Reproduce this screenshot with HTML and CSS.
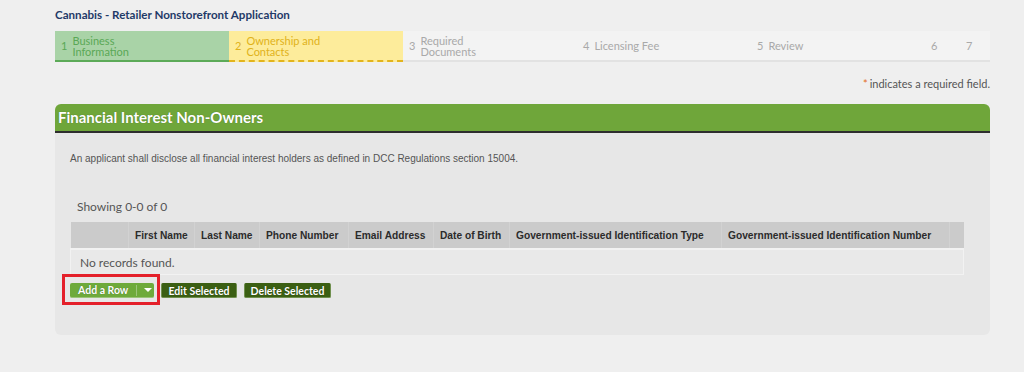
FILE: index.html
```html
<!DOCTYPE html>
<html>
<head>
<meta charset="utf-8">
<link rel="stylesheet" href="styles.css">
</head>
<body>
<div class="page">
  <h1 class="app-title">Cannabis - Retailer Nonstorefront Application</h1>
  <div class="steps">
    <div class="step done"><span class="num">1</span><span class="label">Business<br>Information</span></div>
    <div class="step current"><span class="num">2</span><span class="label">Ownership and<br>Contacts</span></div>
    <div class="step"><span class="num">3</span><span class="label">Required<br>Documents</span></div>
    <div class="step"><span class="num">4</span><span class="label">Licensing Fee</span></div>
    <div class="step"><span class="num">5</span><span class="label">Review</span></div>
    <div class="step small"><span class="num">6</span></div>
    <div class="step tiny"><span class="num">7</span></div>
  </div>
  <div class="required-note"><span class="star">*</span>indicates a required field.</div>
  <div class="panel">
    <div class="panel-head">Financial Interest Non-Owners</div>
    <div class="panel-body">
      <p class="desc">An applicant shall disclose all financial interest holders as defined in DCC Regulations section 15004.</p>
      <div class="showing">Showing 0-0 of 0</div>
      <table class="grid">
        <thead>
          <tr>
            <th class="c-check"></th>
            <th class="c-first">First Name</th>
            <th class="c-last">Last Name</th>
            <th class="c-phone">Phone Number</th>
            <th class="c-email">Email Address</th>
            <th class="c-dob">Date of Birth</th>
            <th class="c-type">Government-issued Identification Type</th>
            <th class="c-number">Government-issued Identification Number</th>
            <th class="c-end"></th>
          </tr>
        </thead>
        <tbody>
          <tr><td colspan="9" class="empty">No records found.</td></tr>
        </tbody>
      </table>
      <div class="actions">
        <span class="highlight">
          <span class="btn btn-light">Add a Row<span class="sep"></span><span class="caret"></span></span>
        </span>
        <span class="btn btn-dark btn-edit">Edit Selected</span>
        <span class="btn btn-dark btn-delete">Delete Selected</span>
      </div>
    </div>
  </div>
</div>
</body>
</html>
```
FILE: styles.css
```css
html, body {
  margin: 0;
  padding: 0;
  background: #efefef;
}
body {
  font-family: Lato, "Open Sans", sans-serif;
}
.page {
  width: 935px;
  margin-left: 55px;
  padding-top: 7px;
}
.app-title {
  margin: 0;
  font-size: 11.6px;
  font-weight: 700;
  color: #1f3a68;
  line-height: 15px;
  height: 24px;
}
.steps {
  display: flex;
  height: 31px;
}
.step {
  box-sizing: border-box;
  width: 174px;
  height: 31px;
  background: #f3f3f3;
  border-bottom: 2px solid #e2e2e2;
  display: flex;
  align-items: center;
  padding-left: 6px;
  gap: 5px;
  color: #a9a9a9;
  font-size: 11px;
  line-height: 11px;
}
.step.done {
  background: #a9d3a7;
  border-bottom-color: #5caa58;
  color: #5aa856;
}
.step.current {
  background: #fdec9b;
  border-bottom: 2px dashed #e3b41c;
  color: #e0b21a;
}
.step.small { width: 35px; }
.step.tiny { width: 30px; }
.required-note {
  text-align: right;
  font-size: 11px;
  color: #555;
  margin-top: 15px;
  line-height: 14px;
  height: 27px;
}
.required-note .star {
  color: #e36b1c;
  margin-right: 2px;
}
.panel {
  background: #e7e7e7;
  border-radius: 6px;
  height: 231px;
}
.panel-head {
  box-sizing: border-box;
  height: 29px;
  background: #6fa63a;
  border-radius: 6px 6px 0 0;
  border-bottom: 2px solid #2e2e2e;
  color: #fff;
  font-weight: 700;
  font-size: 15px;
  line-height: 27px;
  padding-left: 3px;
  text-shadow: 0 0 1px rgba(0,0,0,0.35);
}
.panel-body {
  padding: 0 27px 0 15px;
}
.desc {
  margin: 0;
  padding-top: 20px;
  font-family: "Liberation Sans", Arial, sans-serif;
  font-size: 10px;
  line-height: 12px;
  color: #555;
}
.showing {
  margin-top: 35px;
  padding-left: 7px;
  font-size: 12px;
  line-height: 14px;
  color: #555;
}
.grid {
  margin-top: 8px;
  width: 893px;
  border-collapse: collapse;
  table-layout: fixed;
}
.grid th {
  box-sizing: border-box;
  background: #cbcbcb;
  height: 27px;
  padding: 0 0 0 6px;
  text-align: left;
  font-family: "Liberation Sans", Arial, sans-serif;
  font-size: 10.2px;
  font-weight: 700;
  color: #2b2b2b;
  border-left: 1px solid #d2d2d2;
  white-space: nowrap;
  overflow: hidden;
}
.grid th:first-child { border-left: none; }
.c-check { width: 58px; }
.c-first { width: 66px; }
.c-last { width: 65px; }
.c-phone { width: 89px; }
.c-email { width: 85px; }
.c-dob { width: 76px; }
.c-type { width: 212px; }
.c-number { width: 228px; }
.c-end { width: 14px; }
.grid td.empty {
  height: 24px;
  padding: 0 0 0 9px;
  background: #e9e9e9;
  border: 1px solid #f2f2f2;
  border-top: 2px solid #f2f2f2;
  font-size: 12px;
  color: #555;
}
.actions {
  display: flex;
  gap: 7px;
  margin-top: 8px;
  align-items: center;
}
.highlight {
  position: relative;
  display: inline-flex;
}
.highlight::after {
  content: "";
  position: absolute;
  top: -9px;
  left: -8px;
  right: -6px;
  bottom: -7px;
  border: 3px solid #e4202a;
}
.btn {
  box-sizing: border-box;
  display: inline-flex;
  align-items: center;
  height: 15px;
  padding: 0 8px;
  border-radius: 2px;
  color: #fff;
  font-weight: 700;
  font-size: 10.5px;
  text-shadow: 0 0 1px rgba(0,0,0,0.4);
  white-space: nowrap;
}
.btn-light {
  width: 84px;
  background: #6eaa3b;
  border-bottom: 1px solid #9cc57a;
  padding-right: 0;
}
.btn-light .sep {
  width: 1px;
  height: 11px;
  background: #9cc57a;
  margin-left: 8px;
}
.btn-light .caret {
  width: 0;
  height: 0;
  border-left: 4px solid transparent;
  border-right: 4px solid transparent;
  border-top: 4px solid #fff;
  margin-left: 7px;
}
.btn-dark {
  background: #3b5f13;
  border: 1px solid #6f8f4e;
  border-top-color: #3b5f13;
  justify-content: center;
}
.btn-edit { width: 76px; }
.btn-delete { width: 87px; }
```
